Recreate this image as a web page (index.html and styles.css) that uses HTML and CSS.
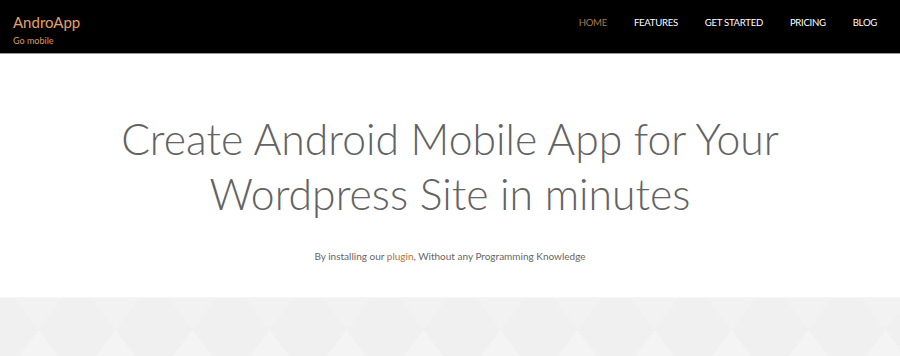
FILE: index.html
```html
<!DOCTYPE html>
<html>
<head>
    <title>AndroApp</title>
    <link rel="stylesheet" href="styles.css">
</head>
<body>
    <div class="entete">
        <div class="marque">
            <a href="#" class="marque_nom">AndroApp</a>
            <span class="marque_slogan">Go mobile</span>
        </div>
        <ul class="menu">
            <li><a href="#" class="actif">HOME</a></li>
            <li><a href="#">FEATURES</a></li>
            <li><a href="#">GET STARTED</a></li>
            <li><a href="#">PRICING</a></li>
            <li><a href="#">BLOG</a></li>
        </ul>
    </div>

    <div class="hero">
        <h1 class="titre">Create Android Mobile App for Your<br>Wordpress Site in minutes</h1>
        <p class="sous_titre">By installing our <a href="#">plugin</a>, Without any Programming Knowledge</p>
    </div>

    <div class="motif"></div>
</body>
</html>
```
FILE: styles.css
```css
body {
    margin: 0;
    background-color: #fff;
    font-family: "Lato", "Open Sans", sans-serif;
}
a {
    text-decoration: none;
}
.entete {
    height: 53px;
    background-color: #000;
    border-bottom: 1px solid #9a9a9a;
    display: flex;
    justify-content: space-between;
    align-items: flex-start;
    padding: 0 23px 0 13px;
}
.marque {
    display: flex;
    flex-direction: column;
    padding-top: 13px;
}
.marque_nom {
    color: #e3a26c;
    font-size: 15px;
    line-height: 18px;
}
.marque_slogan {
    color: #d99a62;
    font-size: 9px;
    line-height: 12px;
    margin-top: 4px;
}
.menu {
    list-style: none;
    margin: 0;
    padding: 17px 0 0 0;
    display: flex;
    gap: 27px;
    font-size: 9.6px;
    line-height: 12px;
}
.menu a {
    color: #fff;
    letter-spacing: -0.3px;
}
.menu a.actif {
    color: #a97a52;
}
.hero {
    height: 243px;
    text-align: center;
    overflow: hidden;
}
.titre {
    margin: 0;
    padding-top: 57px;
    font-weight: 300;
    font-size: 42.7px;
    line-height: 55px;
    color: #636363;
}
.sous_titre {
    margin: 29px 0 0 0;
    font-size: 10px;
    color: #666;
}
.sous_titre a {
    color: #b87234;
}
.motif {
    height: 59px;
    background-color: #f0f0f0;
    background-image:
        conic-gradient(from 143deg at 50% 32px, #f4f4f4 0 74deg, transparent 0),
        conic-gradient(from 323deg at 50% 32px, #f2f2f2 0 74deg, transparent 0);
    background-size: 77px 59px;
    border-top: 1px solid #f6f6f6;
}
```
